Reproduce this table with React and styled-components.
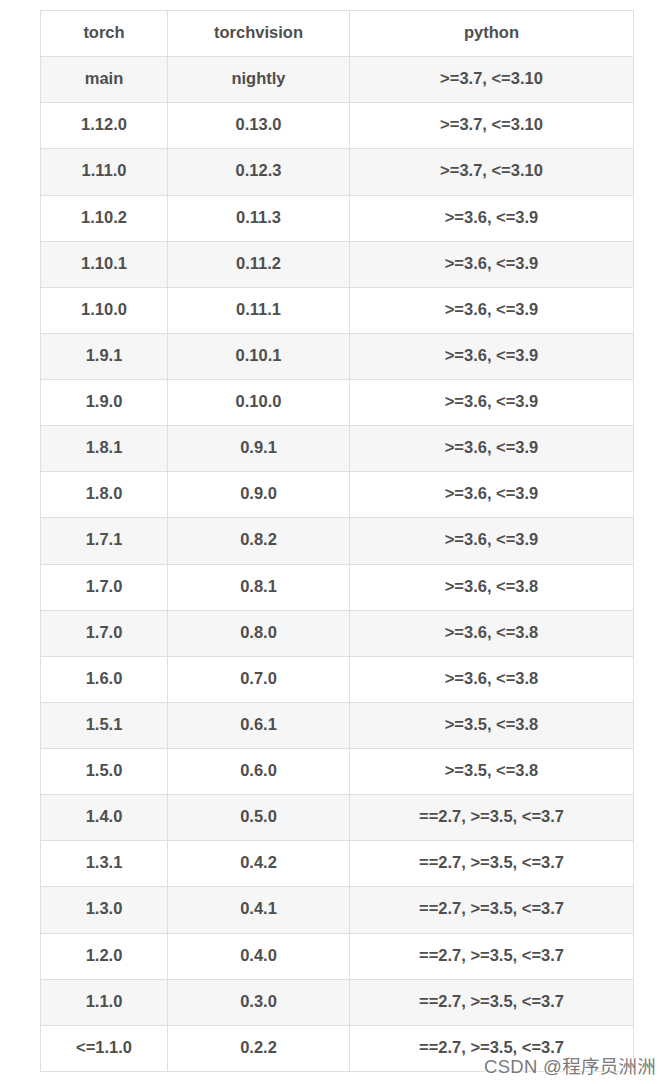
import styled, { createGlobalStyle } from "styled-components";

const rows = [
  ["main", "nightly", ">=3.7, <=3.10"],
  ["1.12.0", "0.13.0", ">=3.7, <=3.10"],
  ["1.11.0", "0.12.3", ">=3.7, <=3.10"],
  ["1.10.2", "0.11.3", ">=3.6, <=3.9"],
  ["1.10.1", "0.11.2", ">=3.6, <=3.9"],
  ["1.10.0", "0.11.1", ">=3.6, <=3.9"],
  ["1.9.1", "0.10.1", ">=3.6, <=3.9"],
  ["1.9.0", "0.10.0", ">=3.6, <=3.9"],
  ["1.8.1", "0.9.1", ">=3.6, <=3.9"],
  ["1.8.0", "0.9.0", ">=3.6, <=3.9"],
  ["1.7.1", "0.8.2", ">=3.6, <=3.9"],
  ["1.7.0", "0.8.1", ">=3.6, <=3.8"],
  ["1.7.0", "0.8.0", ">=3.6, <=3.8"],
  ["1.6.0", "0.7.0", ">=3.6, <=3.8"],
  ["1.5.1", "0.6.1", ">=3.5, <=3.8"],
  ["1.5.0", "0.6.0", ">=3.5, <=3.8"],
  ["1.4.0", "0.5.0", "==2.7, >=3.5, <=3.7"],
  ["1.3.1", "0.4.2", "==2.7, >=3.5, <=3.7"],
  ["1.3.0", "0.4.1", "==2.7, >=3.5, <=3.7"],
  ["1.2.0", "0.4.0", "==2.7, >=3.5, <=3.7"],
  ["1.1.0", "0.3.0", "==2.7, >=3.5, <=3.7"],
  ["<=1.1.0", "0.2.2", "==2.7, >=3.5, <=3.7"],
];

const GlobalStyle = createGlobalStyle`
  body {
    margin: 0;
    background: #fff;
    font-family: "Liberation Sans", Arial, sans-serif;
  }
`;

const Page = styled.div`
  position: relative;
  width: 670px;
  height: 1084px;
  padding: 10px 0 0 40px;
  box-sizing: border-box;
`;

const Table = styled.table`
  border-collapse: collapse;
  width: 593px;
  table-layout: fixed;
  color: #4f4f4f;
  font-size: 16.5px;
  font-weight: bold;
`;

const Row = styled.tr`
  height: 46.13px;
  background: ${(p) => (p.$striped ? "#f6f6f6" : "#fff")};
`;

const Cell = styled.td`
  border: 1px solid #dfdfdf;
  text-align: center;
  vertical-align: middle;
  padding: 0 8px 2px;
  white-space: nowrap;
`;

const HeadCell = styled(Cell).attrs({ as: "th" })`
  font-weight: bold;
`;

const Watermark = styled.div`
  position: absolute;
  left: 484px;
  top: 1052px;
  font-family: "Liberation Sans", "Noto Sans CJK SC", sans-serif;
  font-size: 18.5px;
  color: #7a7a7a;
  letter-spacing: 0.3px;
  text-shadow: 1px 0 #fff, -1px 0 #fff, 0 1px #fff, 0 -1px #fff;
  white-space: nowrap;
`;

export default function App() {
  return (
    <Page>
      <GlobalStyle />
      <Table>
        <colgroup>
          <col style={{ width: "127px" }} />
          <col style={{ width: "182px" }} />
          <col style={{ width: "284px" }} />
        </colgroup>
        <thead>
          <Row>
            <HeadCell>torch</HeadCell>
            <HeadCell>torchvision</HeadCell>
            <HeadCell>python</HeadCell>
          </Row>
        </thead>
        <tbody>
          {rows.map((r, i) => (
            <Row key={i} $striped={i % 2 === 0}>
              <Cell>{r[0]}</Cell>
              <Cell>{r[1]}</Cell>
              <Cell>{r[2]}</Cell>
            </Row>
          ))}
        </tbody>
      </Table>
      <Watermark>CSDN @程序员洲洲</Watermark>
    </Page>
  );
}
